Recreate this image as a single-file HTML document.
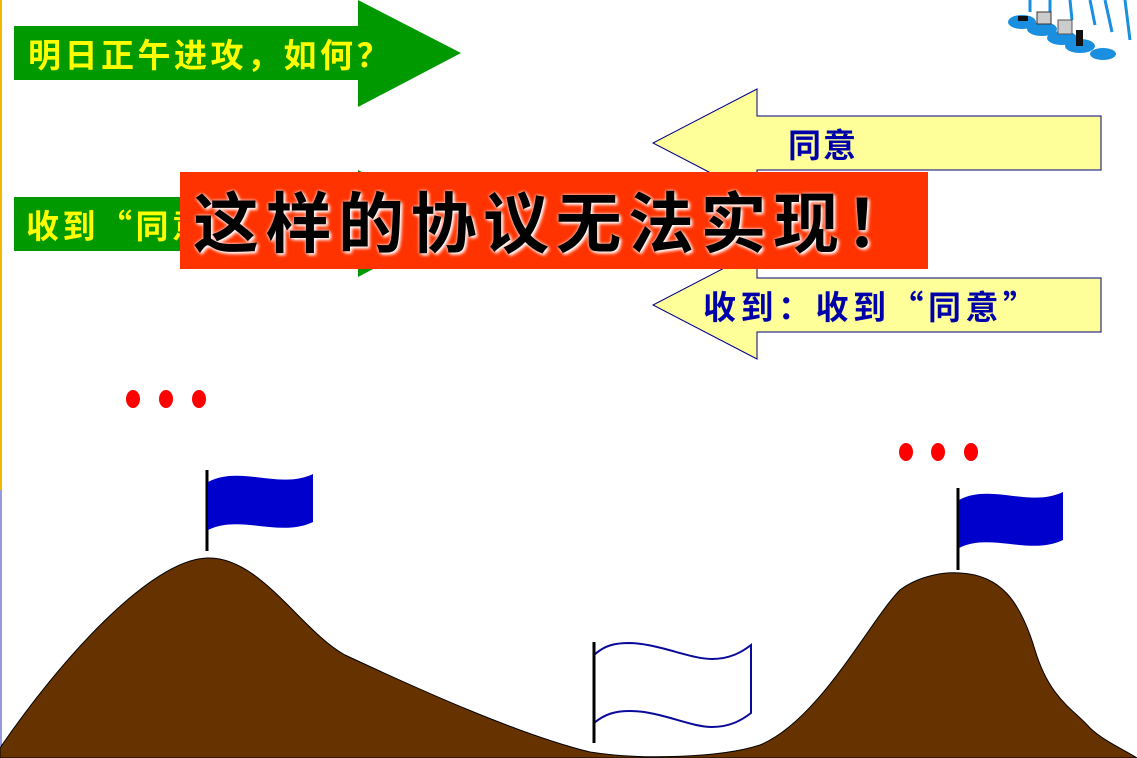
<!DOCTYPE html>
<html><head><meta charset="utf-8"><style>
body{margin:0;width:1137px;height:758px;overflow:hidden;background:#fff;position:relative;font-family:"Noto Sans CJK SC","Liberation Sans",sans-serif}
.t{position:absolute;font-weight:bold;white-space:nowrap}
</style></head><body>
<svg width="1137" height="758" style="position:absolute;left:0;top:0">
<line x1="1" y1="0" x2="1" y2="490" stroke="#f5b800" stroke-width="2"/>
<line x1="1" y1="490" x2="1" y2="758" stroke="#3030c0" stroke-width="1"/>
<polygon points="14,26 358,26 358,0 461,53 358,107 358,80 14,80" fill="#009900"/>
<polygon points="14,197 358,197 358,170 461,223 358,277 358,251 14,251" fill="#009900"/>
<polygon points="1101,116 757,116 757,89 653,143 757,197 757,170 1101,170" fill="#ffff99" stroke="#000080" stroke-width="1"/>
<polygon points="1101,278 757,278 757,251 653,305 757,359 757,332 1101,332" fill="#ffff99" stroke="#000080" stroke-width="1"/>
<g fill="#ff0000">
<ellipse cx="133" cy="399" rx="7" ry="9"/><ellipse cx="166" cy="399" rx="7" ry="9"/><ellipse cx="199" cy="399" rx="7" ry="9"/>
<ellipse cx="906" cy="452" rx="7" ry="9"/><ellipse cx="938" cy="452" rx="7" ry="9"/><ellipse cx="971" cy="452" rx="7" ry="9"/>
</g>
<path d="M0,758 L0,748 C60,660 150,560 207,558 C260,556 300,630 345,655 C420,690 520,735 590,752 C640,760 720,758 760,745 C820,720 870,620 900,590 C920,575 945,572 960,573 C1000,575 1020,600 1035,650 C1050,700 1075,710 1090,728 C1105,742 1125,750 1137,758 Z" fill="#663300" stroke="#000" stroke-width="1"/>
<line x1="207" y1="470" x2="207" y2="551" stroke="#000" stroke-width="3"/>
<path d="M208,482 C240,465 280,490 313,474 L313,522 C280,538 240,514 208,530 Z" fill="#0000cc"/>
<line x1="958" y1="488" x2="958" y2="570" stroke="#000" stroke-width="3"/>
<path d="M959,500 C990,483 1030,508 1063,492 L1063,540 C1030,556 990,532 959,548 Z" fill="#0000cc"/>
<path d="M594,655 C605,645 615,643 630,643 C660,644 690,659 712,659 C730,659 742,652 751,645 L751,713 C742,720 730,727 712,727 C690,727 660,711 630,711 C615,711 605,714 594,723 Z" fill="#fff" stroke="#0a0a9a" stroke-width="2"/>
<line x1="594" y1="642" x2="594" y2="743" stroke="#000" stroke-width="3"/>
<g transform="translate(1000,0)">
<path d="M30,0 L30,12 M50,0 L50,14 M70,0 L72,20 M90,0 L95,25 M105,0 L112,32 M125,0 L130,40" stroke="#1a8fe0" stroke-width="3" fill="none"/>
<ellipse cx="22" cy="22" rx="14" ry="7" fill="#1a8fe0"/><ellipse cx="42" cy="29" rx="15" ry="7" fill="#1a8fe0"/>
<ellipse cx="62" cy="38" rx="15" ry="7" fill="#1a8fe0"/><ellipse cx="80" cy="46" rx="15" ry="7" fill="#1a8fe0"/><ellipse cx="103" cy="54" rx="13" ry="6" fill="#1a8fe0"/>
<rect x="18" y="16" width="10" height="5" fill="#111"/><rect x="37" y="12" width="14" height="12" fill="#ccc" stroke="#333"/><rect x="58" y="20" width="14" height="14" fill="#ccc" stroke="#555"/><rect x="76" y="30" width="7" height="16" fill="#111"/>
</g>
</svg>
<div class="t" style="left:28px;top:31px;font-size:33px;letter-spacing:3.5px;color:#ffff00;line-height:44px">明日正午进攻，如何？</div>
<div class="t" style="left:26px;top:202px;font-size:33px;letter-spacing:3.5px;color:#ffff00;line-height:44px">收到“同意”</div>
<div class="t" style="left:788px;top:121px;font-size:33px;letter-spacing:2px;color:#0000aa;line-height:44px">同意</div>
<div class="t" style="left:703px;top:283px;font-size:33px;letter-spacing:4.5px;color:#0000aa;line-height:44px">收到：收到“同意”</div>
<div style="position:absolute;left:180px;top:172px;width:748px;height:97px;background:#ff3300"></div>
<div class="t" style="left:193px;top:174px;font-size:66px;letter-spacing:6.5px;line-height:90px;color:#000;text-shadow:0 0 3px #fff,2px 2px 3px #fff">这样的协议无法实现！</div>
</body></html>
